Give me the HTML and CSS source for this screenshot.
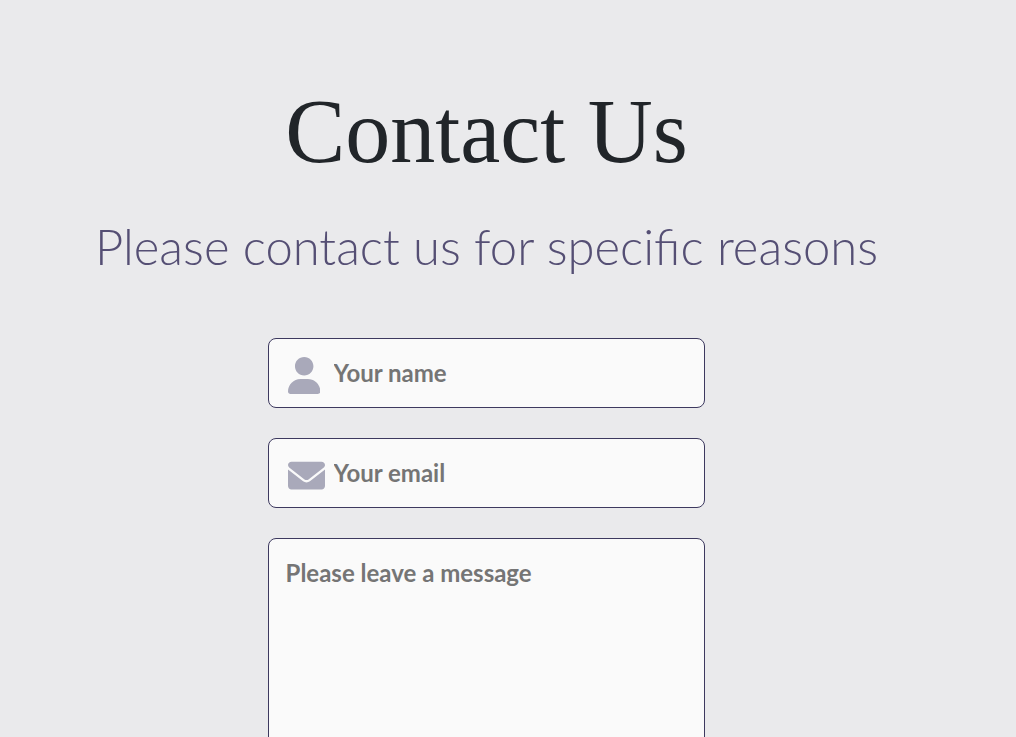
FILE: index.html
```html
<!DOCTYPE html>
<html lang="en">
<head>
<meta charset="utf-8">
<title>Contact Us</title>
<link rel="stylesheet" href="styles.css">
</head>
<body>
<main class="contact">
  <h1 class="title">Contact Us</h1>
  <p class="subtitle">Please contact us for specific reasons</p>
  <form class="form">
    <div class="field">
      <svg class="icon" viewBox="0 0 448 512" aria-hidden="true"><path d="M224 256c70.700 0 128-57.300 128-128S294.700 0 224 0 96 57.300 96 128s57.300 128 128 128zm50.700 48H173.300C77.600 304 0 381.600 0 477.300 0 496.500 15.500 512 34.700 512h378.600c19.200 0 34.700-15.500 34.700-34.700C448 381.600 370.400 304 274.700 304z"/></svg>
      <input class="input" type="text" aria-label="Your name" placeholder="Your name">
    </div>
    <div class="field">
      <svg class="icon" viewBox="0 0 512 512" aria-hidden="true"><path d="M256 352c-16.500 0-33-5.100-47.100-15.400L0 173.500V400c0 26.500 21.500 48 48 48h416c26.500 0 48-21.500 48-48V173.500L303.100 336.600C289 346.900 272.500 352 256 352zM16.300 145.300l212.200 165.100c16.200 12.600 38.900 12.600 55.100 0l212.200-165.100C505.100 137.300 512 125 512 112c0-26.500-21.500-48-48-48H48C21.500 64 0 85.500 0 112c0 13 6 25.300 16.300 33.300z"/></svg>
      <input class="input" type="email" aria-label="Your email" placeholder="Your email">
    </div>
    <textarea class="message" aria-label="Please leave a message" placeholder="Please leave a message"></textarea>
  </form>
</main>
</body>
</html>
```
FILE: styles.css
```css
* { box-sizing: border-box; }
body {
  margin: 0;
  min-height: 100vh;
  overflow: hidden;
  background: #eaeaec;
  font-family: Lato, sans-serif;
  color: #212529;
}
.contact {
  padding: 78px 43px 0 0;
  text-align: center;
}
.title {
  margin: 0;
  font: 400 90px/108px "Liberation Serif", serif;
}
.subtitle {
  margin: 22px 0 54px;
  color: #554f74;
  font-size: 49px;
  font-weight: 300;
  line-height: 76px;
}
.form {
  display: flex;
  flex-direction: column;
  gap: 30px;
  width: 45%;
  min-width: 437px;
  margin: 0 auto;
}
.field {
  display: grid;
  align-items: center;
}
.field > * { grid-area: 1 / 1; }
.icon {
  z-index: 1;
  height: 37px;
  margin: 5px 0 0 20px;
  fill: #a9a9ba;
  pointer-events: none;
}
.input, .message {
  width: 100%;
  border: 1px solid #3d395f;
  border-radius: 8px;
  background: #fafafa;
  font: 700 24px/36px Lato, sans-serif;
  color: #212529;
}
.input {
  height: 70px;
  padding: 0 16px 2px 65px;
}
.message {
  display: block;
  height: 300px;
  padding: 16px 17px;
  resize: none;
}
.input::placeholder, .message::placeholder {
  color: #757575;
  opacity: 1;
}
```
